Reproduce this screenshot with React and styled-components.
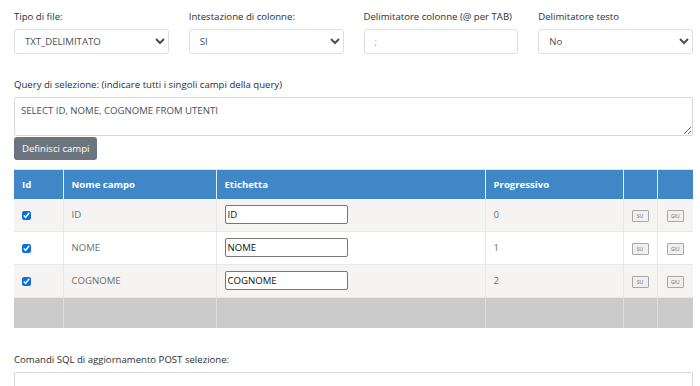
import React from 'react'
import styled, { createGlobalStyle } from 'styled-components'

const GlobalStyle = createGlobalStyle`
  body {
    margin: 0;
    background: #fff;
    font-family: 'Open Sans', 'Noto Sans', sans-serif;
    font-size: 9.6px;
    color: #2b2f33;
  }
`

const Page = styled.div`
  width: 700px;
  height: 386px;
  overflow: hidden;
  padding: 10px 7px 0 14px;
  box-sizing: border-box;
`

const FieldRow = styled.div`
  display: grid;
  grid-template-columns: repeat(4, 1fr);
  column-gap: 20px;
`

const Field = styled.div`
  display: flex;
  flex-direction: column;
`

const Label = styled.label`
  display: block;
  line-height: 14px;
  margin-bottom: 5px;
  color: #2b2f33;
`

const Select = styled.select`
  height: 25px;
  width: 100%;
  border: 1px solid #dcdfe3;
  border-radius: 3px;
  background: #fff;
  font: inherit;
  color: #495057;
  padding: 0 6px;
`

const TextInput = styled.input`
  height: 25px;
  box-sizing: border-box;
  width: 100%;
  border: 1px solid #dcdfe3;
  border-radius: 3px;
  font: inherit;
  color: #9aa0a6;
  padding: 0 10px;
`

const QueryBlock = styled.div`
  margin-top: 24px;
`

const TextArea = styled.textarea`
  display: block;
  box-sizing: border-box;
  width: 100%;
  height: ${p => p.$h}px;
  border: 1px solid #d6d8da;
  border-radius: 2px;
  font: inherit;
  color: #495057;
  padding: 6px 6px;
  resize: vertical;
`

const Button = styled.button`
  display: block;
  background: #6c757d;
  color: #fff;
  border: none;
  border-radius: 3px;
  font: inherit;
  height: 23px;
  padding: 0 8px;
  margin-top: 1px;
`

const Table = styled.table`
  width: 100%;
  table-layout: fixed;
  margin-top: 9px;
  border-collapse: collapse;
  border-top: 1px solid #cfe6f5;
`

const Th = styled.th`
  background: #3f87c7;
  color: #fff;
  font-weight: 700;
  text-align: left;
  height: 29px;
  padding: 0 8px;
  border-left: 1px solid #e4eef7;
  width: ${p => (p.$w ? `${p.$w}px` : 'auto')};
  box-sizing: border-box;
  &:first-child { border-left: none; }
`

const Tr = styled.tr`
  background: ${p => (p.$striped ? '#f5f4f2' : '#fff')};
`

const Td = styled.td`
  height: 32px;
  padding: 0 8px;
  color: #6b6f73;
  border-left: 1px solid #e8e8e8;
  border-bottom: 1px solid #e8e8e8;
  text-align: ${p => (p.$center ? 'center' : 'left')};
  &:first-child { border-left: none; }
`

const EmptyRow = styled.tr`
  background: #cbcbcb;
  td {
    height: 28px;
    border-left: 1px solid #dedede;
  }
  td:first-child { border-left: none; }
`

const Check = styled.input`
  width: 9px;
  height: 9px;
  margin: 0;
  vertical-align: middle;
  accent-color: #0b6ee0;
`

const CellInput = styled.input`
  box-sizing: border-box;
  width: 123px;
  height: 19px;
  border: 1px solid #767676;
  border-radius: 2px;
  font: inherit;
  color: #111;
  padding: 0 2px;
`

const Mini = styled.button`
  font: inherit;
  font-size: 5px;
  color: #666;
  background: #f0f0f0;
  border: 1px solid #a8a8a8;
  border-radius: 1px;
  height: 12px;
  width: 17px;
  padding: 0;
`

const SqlBlock = styled.div`
  margin-top: 25px;
`

const rows = [
  { name: 'ID', label: 'ID', prog: 0 },
  { name: 'NOME', label: 'NOME', prog: 1 },
  { name: 'COGNOME', label: 'COGNOME', prog: 2 }
]

export default function App () {
  return (
    <Page>
      <GlobalStyle />
      <FieldRow>
        <Field>
          <Label>Tipo di file:</Label>
          <Select defaultValue='TXT_DELIMITATO'>
            <option>TXT_DELIMITATO</option>
          </Select>
        </Field>
        <Field>
          <Label>Intestazione di colonne:</Label>
          <Select defaultValue='SI'>
            <option>SI</option>
          </Select>
        </Field>
        <Field>
          <Label>Delimitatore colonne (@ per TAB)</Label>
          <TextInput defaultValue=';' />
        </Field>
        <Field>
          <Label>Delimitatore testo</Label>
          <Select defaultValue='No'>
            <option>No</option>
          </Select>
        </Field>
      </FieldRow>

      <QueryBlock>
        <Label>Query di selezione: (indicare tutti i singoli campi della query)</Label>
        <TextArea $h={39} defaultValue='SELECT ID, NOME, COGNOME FROM UTENTI' />
        <Button>Definisci campi</Button>
      </QueryBlock>

      <Table>
        <thead>
          <tr>
            <Th $w={49}>Id</Th>
            <Th $w={153}>Nome campo</Th>
            <Th $w={269}>Etichetta</Th>
            <Th $w={138}>Progressivo</Th>
            <Th $w={34} />
            <Th />
          </tr>
        </thead>
        <tbody>
          {rows.map((r, i) => (
            <Tr key={r.name} $striped={i % 2 === 0}>
              <Td><Check type='checkbox' defaultChecked /></Td>
              <Td>{r.name}</Td>
              <Td><CellInput defaultValue={r.label} /></Td>
              <Td>{r.prog}</Td>
              <Td $center><Mini>SU</Mini></Td>
              <Td $center><Mini>GIU</Mini></Td>
            </Tr>
          ))}
          <EmptyRow>
            <td /><td /><td /><td /><td /><td />
          </EmptyRow>
        </tbody>
      </Table>

      <SqlBlock>
        <Label>Comandi SQL di aggiornamento POST selezione:</Label>
        <TextArea $h={60} />
      </SqlBlock>
    </Page>
  )
}
